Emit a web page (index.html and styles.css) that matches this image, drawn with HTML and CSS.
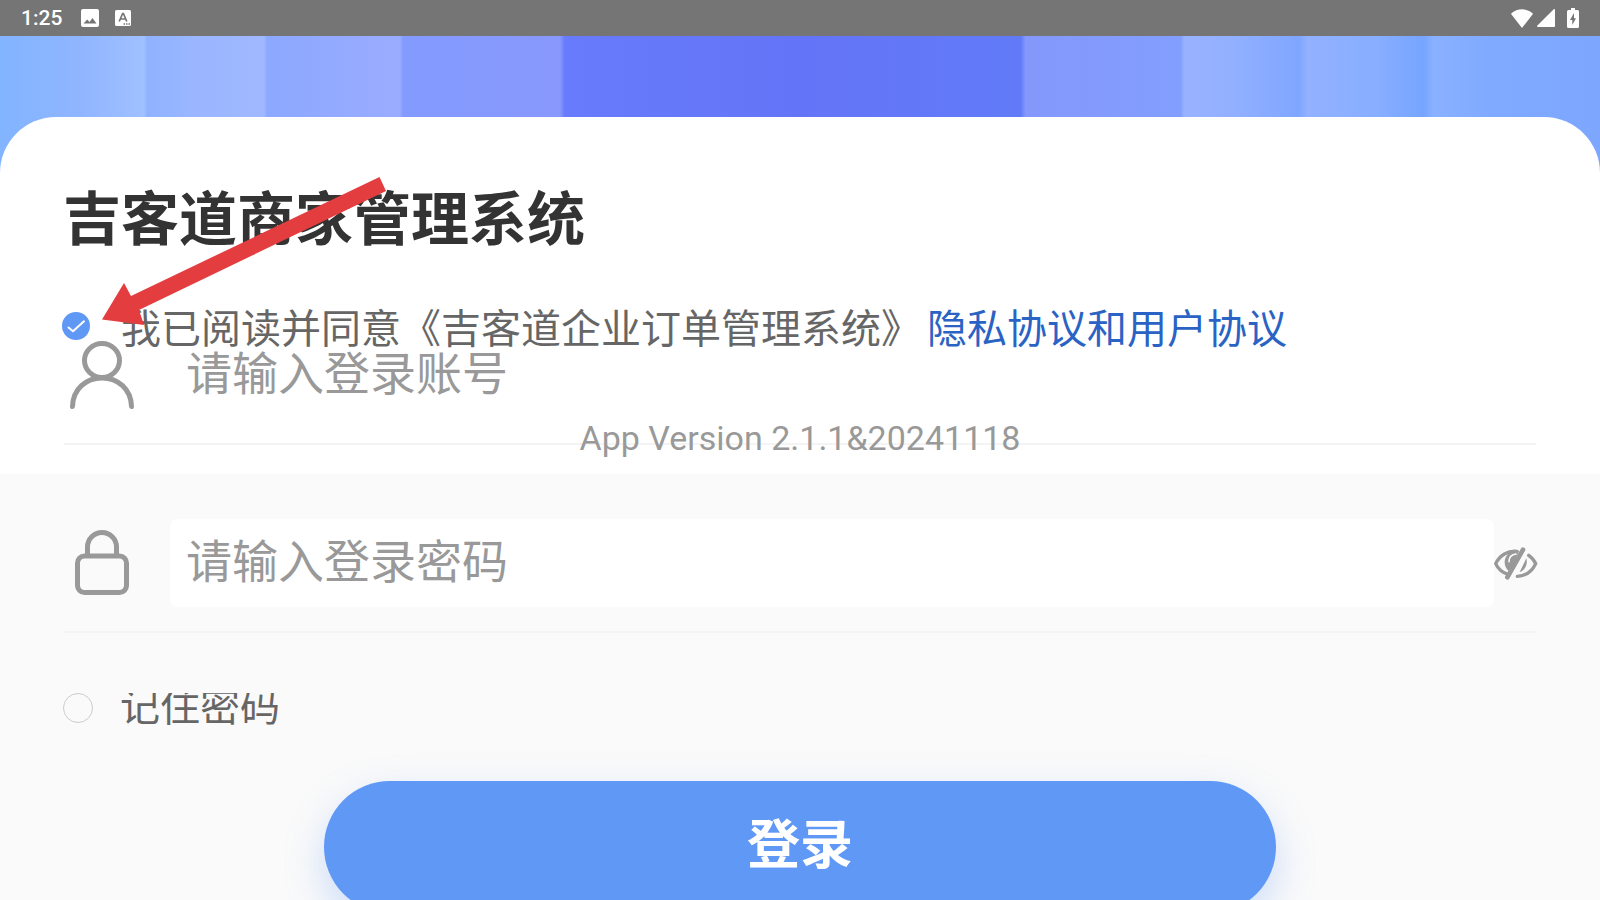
FILE: index.html
```html
<!DOCTYPE html>
<html lang="zh-CN"><head>
    <meta charset="UTF-8">
    <meta name="viewport" content="width=device-width, initial-scale=1">
    <title>吉客道商家管理系统</title>
    <link rel="stylesheet" href="styles.css">
</head><body>

    <!--Status bar-->
    <header class="status-bar">
      <span class="time">1:25</span>
      <svg class="icon-photo" viewBox="0 0 18 18" width="18" height="18"><path fill="#fff" fill-rule="evenodd" d="M2 0h14a2 2 0 0 1 2 2v14a2 2 0 0 1-2 2H2a2 2 0 0 1-2-2V2a2 2 0 0 1 2-2zM2.500 14.500h13L11.500 9l-3 4-2.200-2.500z"/></svg>
      <svg class="icon-key" viewBox="0 0 16 16" width="16" height="16"><rect width="16" height="16" rx="1.500" fill="#fff"/><path fill="none" stroke="#757575" stroke-width="1.700" d="M4.200 11.500 7.600 3.500h.8l3.400 8M5.500 9h5"/><path stroke="#757575" stroke-width="1.500" stroke-dasharray="1.500 1" d="M8.500 14h6.500"/></svg>
      <span class="spacer"></span>
      <svg class="icon-wifi" viewBox="0 0 22 19" width="22" height="19"><path fill="#fff" d="M11 19 .3 5.200C.1 4.900.1 4.500.5 4.200 6.500-1 15.500-1 21.500 4.200c.4.300.4.700.2 1z"/></svg>
      <svg class="icon-signal" viewBox="0 0 18 18" width="18" height="18"><path fill="#fff" d="M18 1v16a1 1 0 0 1-1 1H1c-1 0-1.200-.8-.6-1.400L16.500.5C17.200-.2 18 .1 18 1z"/></svg>
      <svg class="icon-battery" viewBox="0 0 12 20" width="12" height="20"><path fill="#fff" fill-rule="evenodd" d="M4 0h4v2h2.500A1.500 1.500 0 0 1 12 3.500v15a1.500 1.500 0 0 1-1.500 1.500h-9A1.500 1.500 0 0 1 0 18.500v-15A1.500 1.500 0 0 1 1.500 2H4zM7 5l-4 7h2.300v5L9 10.200H7z"/></svg>
    </header>

    <main class="login">
      <form class="sheet">
        <h1>吉客道商家管理系统</h1>

        <!--Agreement-->
        <div class="agreement">
          <span class="check">
            <input type="checkbox" id="agree" checked>
            <svg viewBox="0 0 28 28" width="28" height="28"><path fill="none" stroke="#fff" stroke-width="2" stroke-linecap="round" stroke-linejoin="round" d="M6.500 15.500l4.500 3.800 11-10"/></svg>
          </span>
          <label for="agree">我已阅读并同意《吉客道企业订单管理系统》</label>
          <a href="#">隐私协议和用户协议</a>
        </div>

        <!--Account-->
        <div class="field">
          <label class="field-icon" for="account" aria-label="账号">
            <svg viewBox="0 0 66 70" width="66" height="70"><g fill="none" stroke="#999" stroke-width="5" stroke-linecap="round"><ellipse cx="33" cy="20.500" rx="17.500" ry="17"/><path d="M3.500 66.500C4 49 17 38 33 38S62 49 62.500 66.500"/></g></svg>
          </label>
          <input type="text" id="account" placeholder="请输入登录账号">
          <p class="version">App Version 2.1.1&amp;20241118</p>
        </div>

        <!--Password-->
        <div class="field">
          <label class="field-icon" for="password" aria-label="密码">
            <svg viewBox="0 0 66 70" width="66" height="70"><g fill="none" stroke="#999" stroke-width="5"><rect x="8.500" y="28" width="49" height="36.500" rx="7"/><path d="M18.500 28V19a14.500 14.500 0 0 1 29 0v9"/></g></svg>
          </label>
          <input type="password" id="password" placeholder="请输入登录密码">
          <button type="button" class="eye" aria-label="显示密码">
            <svg viewBox="163 379 132 99" width="44" height="33"><g fill="none" stroke="#999" stroke-width="10" stroke-linecap="round"><path d="M232 392C205 389 180 404 168 429c8 18 20 27 37 32"/><path d="M267 404c10 7 17 15 21 25-12 25-32 37-55 38"/><path stroke-width="14" d="M250 387 203 470"/></g><path fill="#999" d="M238 391c-24-4-41 12-43 31-1 14 6 25 16 32zM260 413c5 18-4 36-20 41z"/><path fill="none" stroke="#fafafa" stroke-width="5" stroke-linecap="round" d="M208 423c-1-13 8-22 21-23"/></svg>
          </button>
        </div>

        <!--Remember password-->
        <div class="remember">
          <input type="checkbox" id="remember">
          <label for="remember">记住密码</label>
        </div>

        <button type="submit" class="submit">登录</button>
      </form>
    </main>

    <!--Pointer to the agreement tick-->
    <svg class="arrow" viewBox="0 0 284 149" width="284" height="149"><path fill="#e43d3f" d="M277.500 0l6.500 14L37 133l5 15L0 142.500 22 106l7 13z"/></svg>

</body></html>
```

FILE: styles.css
```css
* { box-sizing: border-box; }
body { margin: 0; height: 100vh; overflow: hidden; display: flex; flex-direction: column; position: relative; font-family: Roboto, "Noto Sans CJK SC", sans-serif; background-color: #fafafa; }
svg { display: block; flex: none; }
button { border: 0; padding: 0; font-family: inherit; cursor: pointer; }
input { font-family: inherit; margin: 0; }

.status-bar { flex: none; display: flex; align-items: center; height: 36px; padding: 0 21px; background: #757575; color: white; }
.time { font-size: 21px; font-weight: 500; line-height: 36px; }
.icon-photo { margin-left: 19px; }
.icon-key { margin-left: 16px; }
.spacer { flex: 1; }
.icon-signal { margin-left: 4px; }
.icon-battery { margin-left: 12px; }

/* striped banner behind the sheet */
.login {
  flex: 1;
  padding-top: 81px;
  background:
    linear-gradient(90deg,
      #82b4ff 0, #90b5ff 5%, #a0c0ff 9%,
      #8fb2ff 9.2%, #9ab6ff 12%, #a0b8ff 16.5%,
      #8ca8ff 16.7%, #9aacff 25%,
      #839aff 25.2%, #8898fc 35%,
      #677bfc 35.3%, #6474f8 50%, #617bf8 63.8%,
      #8498fb 64.1%, #829eff 73.8%,
      #98b2ff 74%, #92b0ff 77%, #7fa6ff 81.2%,
      #92b1ff 81.7%, #88aeff 86%, #76a5ff 89%,
      #8ab1ff 89.6%, #80aaff 93%, #7da7ff 100%);
}

.sheet { display: flex; flex-direction: column; min-height: 100%; padding: 73px 64px 0; border-radius: 56px 56px 0 0; background: linear-gradient(#fff 357px, #fafafa 357px); }
h1 { margin: 0 0 0 -1px; font-size: 58px; line-height: 60px; color: #333; }

.agreement { position: relative; z-index: 1; display: flex; align-items: center; height: 40px; margin: 60px 0 -19px; font-size: 40px; line-height: 40px; color: #666; }
.agreement label { margin-left: 31px; }
.agreement a { margin-left: 6px; color: #2b63c4; text-decoration: none; }
.check { display: grid; margin: 0 0 8px -2px; }
.check input, .check svg { grid-area: 1 / 1; width: 28px; height: 28px; }
.check input { appearance: none; border-radius: 50%; background: #6098f5; }
.check svg { pointer-events: none; }

.field { position: relative; display: flex; align-items: flex-start; height: 114px; border-bottom: 2px solid #f4f4f4; }
.field + .field { margin-top: 74px; }
.field-icon { width: 106px; padding: 9px 0 0 5px; }
.field input { flex: 1; min-width: 0; height: 88px; padding: 0 16px 2px; border: 0; border-radius: 8px; background: white; font-size: 46px; color: #333; }
.field input::placeholder { color: #999; opacity: 1; }
.version { position: absolute; top: 87px; left: 0; right: 0; margin: 0; text-align: center; font-size: 34px; line-height: 40px; color: #999; }
.eye { margin: 28px -2px 0 0; background: none; }

.remember { display: flex; align-items: flex-start; margin: 60px 0 0 -1px; font-size: 40px; color: #666; }
.remember input { appearance: none; width: 30px; height: 30px; border: 1px solid #ccc; border-radius: 50%; }
.remember label { display: flex; align-items: flex-end; height: 34px; margin-left: 27px; overflow: hidden; line-height: 38px; }

.submit { flex: none; align-self: center; width: calc(65% - 4px); height: 132px; margin-top: 54px; padding-bottom: 12px; border-radius: 66px; background: #6098f5; color: white; font-size: 53px; font-weight: bold; box-shadow: 0 16px 40px rgba(96, 152, 245, 0.3); }

.arrow { position: absolute; top: 177px; left: 102px; z-index: 2; pointer-events: none; }
```
